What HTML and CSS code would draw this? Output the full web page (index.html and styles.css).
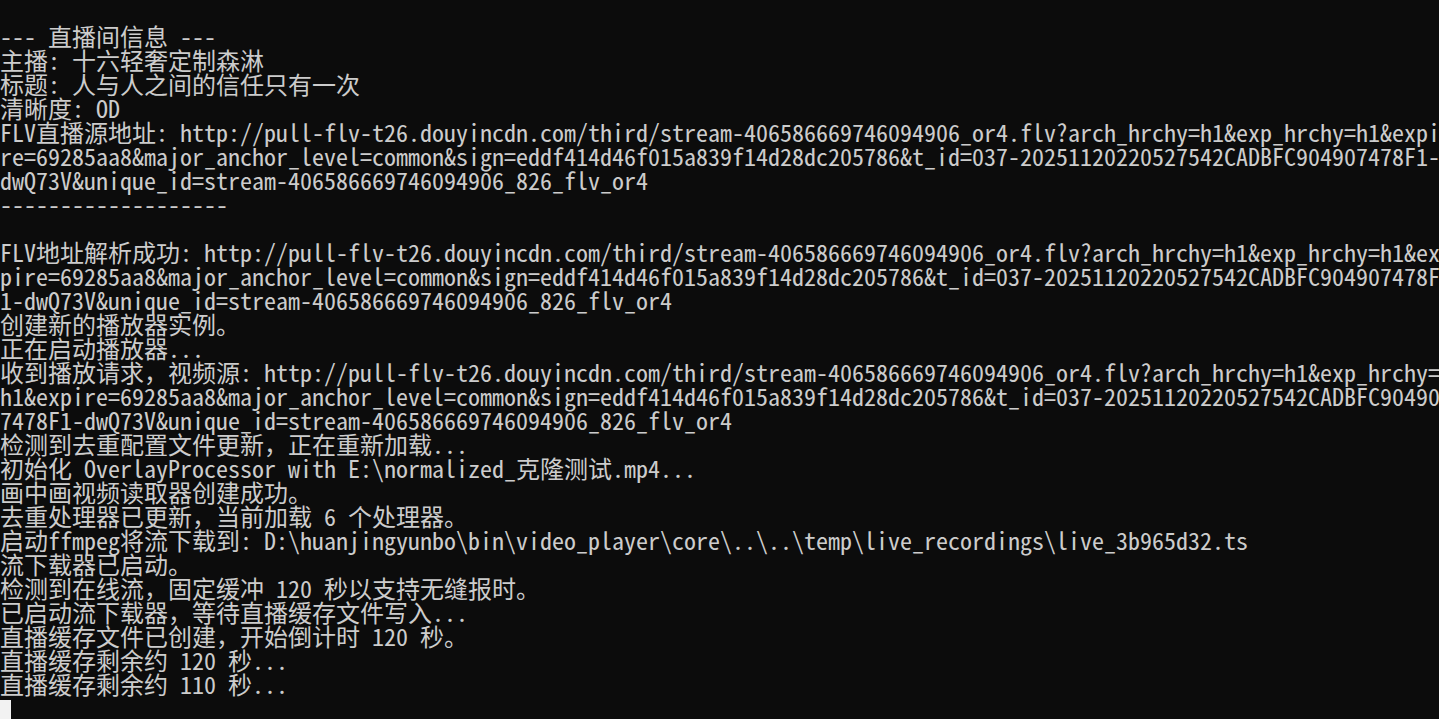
FILE: index.html
```html
<!DOCTYPE html>
<html lang="zh-CN">
<head>
<meta charset="utf-8">
<title>Console</title>
<link rel="stylesheet" href="styles.css">
</head>
<body>
<main class="console">
<div class="line"> </div>
<div class="line">--- 直播间信息 ---</div>
<div class="line">主播: 十六轻奢定制森淋</div>
<div class="line">标题: 人与人之间的信任只有一次</div>
<div class="line">清晰度: OD</div>
<div class="line">FLV直播源地址: http://pull-flv-t26.douyincdn.com/third/stream-406586669746094906_or4.flv?arch_hrchy=h1&amp;exp_hrchy=h1&amp;expi</div>
<div class="line">re=69285aa8&amp;major_anchor_level=common&amp;sign=eddf414d46f015a839f14d28dc205786&amp;t_id=037-20251120220527542CADBFC904907478F1-</div>
<div class="line">dwQ73V&amp;unique_id=stream-406586669746094906_826_flv_or4</div>
<div class="line">-------------------</div>
<div class="line"> </div>
<div class="line">FLV地址解析成功: http://pull-flv-t26.douyincdn.com/third/stream-406586669746094906_or4.flv?arch_hrchy=h1&amp;exp_hrchy=h1&amp;ex</div>
<div class="line">pire=69285aa8&amp;major_anchor_level=common&amp;sign=eddf414d46f015a839f14d28dc205786&amp;t_id=037-20251120220527542CADBFC904907478F</div>
<div class="line">1-dwQ73V&amp;unique_id=stream-406586669746094906_826_flv_or4</div>
<div class="line">创建新的播放器实例。</div>
<div class="line">正在启动播放器...</div>
<div class="line">收到播放请求，视频源: http://pull-flv-t26.douyincdn.com/third/stream-406586669746094906_or4.flv?arch_hrchy=h1&amp;exp_hrchy=</div>
<div class="line">h1&amp;expire=69285aa8&amp;major_anchor_level=common&amp;sign=eddf414d46f015a839f14d28dc205786&amp;t_id=037-20251120220527542CADBFC90490</div>
<div class="line">7478F1-dwQ73V&amp;unique_id=stream-406586669746094906_826_flv_or4</div>
<div class="line">检测到去重配置文件更新，正在重新加载...</div>
<div class="line">初始化 OverlayProcessor with E:\normalized_克隆测试.mp4...</div>
<div class="line">画中画视频读取器创建成功。</div>
<div class="line">去重处理器已更新，当前加载 6 个处理器。</div>
<div class="line">启动ffmpeg将流下载到: D:\huanjingyunbo\bin\video_player\core\..\..\temp\live_recordings\live_3b965d32.ts</div>
<div class="line">流下载器已启动。</div>
<div class="line">检测到在线流，固定缓冲 120 秒以支持无缝报时。</div>
<div class="line">已启动流下载器，等待直播缓存文件写入...</div>
<div class="line">直播缓存文件已创建，开始倒计时 120 秒。</div>
<div class="line">直播缓存剩余约 120 秒...</div>
<div class="line">直播缓存剩余约 110 秒...</div>
<div class="line"><span class="cursor"></span></div>
</main>
</body>
</html>
```

FILE: styles.css
```css
html, body {
  margin: 0;
  padding: 0;
  background: #0c0c0c;
  height: 100%;
  overflow: hidden;
}

.console {
  display: flex;
  flex-direction: column;
  color: #cccccc;
  font-family: "Noto Sans Mono CJK SC", "Liberation Mono", "Noto Sans CJK SC", monospace;
  font-size: 24px;
  line-height: 24px;
}

.line {
  white-space: pre;
  height: 24px;
  overflow: visible;
}

.cursor {
  display: inline-block;
  width: 11px;
  height: 20px;
  margin-top: 4px;
  vertical-align: top;
  background: #f2f2f2;
}
```
